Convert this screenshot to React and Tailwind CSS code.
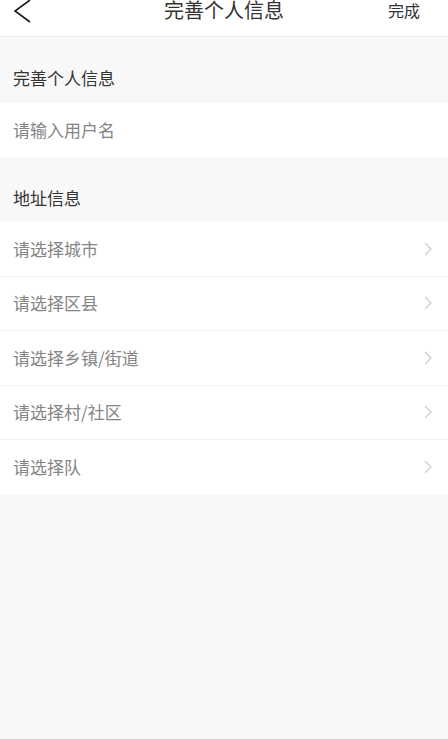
import React from "react";

const font = { fontFamily: '"Noto Sans CJK SC", "Noto Sans", sans-serif' };

function Chevron() {
  return (
    <svg width="10" height="14" viewBox="0 0 10 14" className="shrink-0">
      <polyline points="2,1 8,7 2,13" fill="none" stroke="#cccccc" strokeWidth="1.3" />
    </svg>
  );
}

function SelectRow({ label, last }) {
  return (
    <div
      className={
        "flex items-center justify-between h-[54.5px] pl-[13px] pr-[15px] bg-white " +
        (last ? "" : "border-b border-[#f2f2f2]")
      }
    >
      <span className="text-[17px] leading-[22px] text-[#858585]">{label}</span>
      <Chevron />
    </div>
  );
}

export default function App() {
  return (
    <div className="w-[448px] h-[739px] bg-[#f8f8f8] flex flex-col" style={font}>
      <div className="relative h-[37px] bg-white border-b border-[#ececec] flex items-start justify-between">
        <svg width="40" height="24" viewBox="0 0 40 24">
          <polyline points="30,0 15,11 30,22" fill="none" stroke="#1a1a1a" strokeWidth="1.6" />
        </svg>
        <div className="absolute left-0 right-0 top-0 text-center text-[20px] leading-[20px] text-[#333]">
          完善个人信息
        </div>
        <div className="mr-[28px] mt-[2px] text-[16px] leading-[17px] text-[#333]">完成</div>
      </div>

      <div className="h-[66px] pt-[30px] pl-[13px] text-[17px] leading-[22px] text-[#333]">完善个人信息</div>
      <div className="h-[54px] bg-white flex items-center pl-[13px]">
        <span className="text-[17px] leading-[22px] text-[#858585]">请输入用户名</span>
      </div>

      <div className="h-[65px] pt-[30px] pl-[13px] text-[17px] leading-[22px] text-[#333]">地址信息</div>
      <div className="flex flex-col">
        <SelectRow label="请选择城市" />
        <SelectRow label="请选择区县" />
        <SelectRow label="请选择乡镇/街道" />
        <SelectRow label="请选择村/社区" />
        <SelectRow label="请选择队" last />
      </div>
    </div>
  );
}
